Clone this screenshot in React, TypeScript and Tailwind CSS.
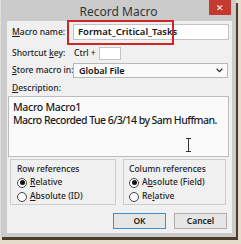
import React from "react";

const font = { fontFamily: '"Noto Sans", "Open Sans", Arial, sans-serif' };

function Radio({ checked, label }: { checked?: boolean; label: React.ReactNode }) {
  return (
    <div className="flex items-center gap-[3px] h-[13px]">
      <div className="w-[10px] h-[10px] shrink-0 rounded-full border border-[#444] bg-white flex items-center justify-center">
        {checked && <div className="w-[5px] h-[5px] rounded-full bg-[#111]" />}
      </div>
      <span className="text-[8.5px] leading-none font-medium text-[#1c1c1c] whitespace-nowrap">{label}</span>
    </div>
  );
}

export default function App() {
  return (
    <div className="w-[241px] h-[244px] bg-[#e6dccb] overflow-hidden" style={font}>
      <div className="relative w-[236px] h-[237px] bg-[#cbcbcb] border-l border-[#dedede] shadow-[2px_3px_0_#4b3d2e]">
        {/* title bar */}
        <div className="h-[21px] flex items-center justify-center">
          <span className="text-[12px] leading-none text-[#333] pt-[2px] whitespace-nowrap">Record Macro</span>
        </div>
        <div className="absolute right-[5px] top-0 w-[22px] h-[15px] bg-[#c53a2f] flex items-center justify-center text-white text-[9px] leading-none">
          ✕
        </div>
        {/* client */}
        <div className="ml-[6px] mr-[4px] h-[212px] bg-[#f0f0f0] relative px-[2px]">
          {/* row 1 */}
          <div className="flex items-center pt-[3px] h-[19px]">
            <span className="w-[64px] shrink-0 pl-[3px] text-[8.5px] leading-none font-medium text-[#1c1c1c] whitespace-nowrap">
              <span className="underline">M</span>acro name:
            </span>
            <div className="w-[156px] h-[16px] shrink-0 bg-white border border-[#c4c4c4] flex items-center pl-[4px]">
              <span className="text-[9.5px] leading-none font-semibold text-[#111] whitespace-nowrap">Format_Critical_Tasks</span>
            </div>
          </div>
          <div className="absolute left-[60px] top-[-1px] w-[107px] h-[25px] border-2 border-[#d0262a]" />
          {/* row 2 */}
          <div className="flex items-center mt-[7px] h-[13px]">
            <span className="w-[64px] shrink-0 pl-[3px] text-[8.5px] leading-none font-medium text-[#1c1c1c] whitespace-nowrap">
              Shortcut <span className="underline">k</span>ey:
            </span>
            <span className="text-[8.5px] leading-none font-medium text-[#1c1c1c] w-[26px] shrink-0 pl-[1px] whitespace-nowrap">Ctrl +</span>
            <div className="w-[22px] h-[13px] shrink-0 bg-white border border-[#c4c4c4]" />
          </div>
          {/* row 3 */}
          <div className="flex items-center mt-[3px] h-[15px]">
            <span className="w-[64px] shrink-0 pl-[3px] text-[8.5px] leading-none font-medium text-[#1c1c1c] whitespace-nowrap">
              <span className="underline">S</span>tore macro in:
            </span>
            <div className="w-[155px] h-[15px] shrink-0 bg-[#fafafa] border border-[#b8b8b8] flex items-center justify-between pl-[5px] pr-[4px]">
              <span className="text-[9px] leading-none font-semibold text-[#111] whitespace-nowrap">Global File</span>
              <svg width="7" height="5" viewBox="0 0 7 5">
                <path d="M0.7 0.8 L3.5 3.6 L6.3 0.8" stroke="#333" strokeWidth="1.3" fill="none" />
              </svg>
            </div>
          </div>
          {/* description */}
          <div className="mt-[4px] h-[13px] flex items-center pl-[3px]">
            <span className="text-[8.5px] leading-none font-medium text-[#1c1c1c] whitespace-nowrap">
              <span className="underline">D</span>escription:
            </span>
          </div>
          <div className="relative mt-[1px] ml-[-1px] w-[221px] h-[61px] bg-[#fafafa] border border-[#bdbdbd] pl-[4px] pt-[4px]">
            <div className="text-[10.5px] leading-[13px] font-medium text-[#1a1a1a] tracking-[-0.3px] whitespace-nowrap">Macro Macro1</div>
            <div className="text-[10.5px] leading-[13px] font-medium text-[#1a1a1a] tracking-[-0.55px] whitespace-nowrap">
              Macro Recorded Tue 6/3/14 by Sam Huffman.
            </div>
            <svg className="absolute left-[176px] top-[41px]" width="7" height="14" viewBox="0 0 7 14">
              <path d="M1 0.5 H6 M3.5 0.5 V13.5 M1 13.5 H6" stroke="#333" strokeWidth="1" fill="none" />
            </svg>
          </div>
          {/* groups */}
          <div className="flex mt-[2px] gap-[7px] pl-[1px]">
            <div className="w-[106px] h-[46px] border border-[#cdcdcd] pl-[6px] pt-[3px] flex flex-col gap-[1px]">
              <span className="text-[8.5px] leading-[12px] font-medium text-[#1c1c1c] whitespace-nowrap">Row references</span>
              <Radio checked label={<><span className="underline">R</span>elative</>} />
              <Radio label={<><span className="underline">A</span>bsolute (ID)</>} />
            </div>
            <div className="w-[103px] h-[46px] border border-[#cdcdcd] pl-[5px] pt-[3px] flex flex-col gap-[1px]">
              <span className="text-[8.5px] leading-[12px] font-medium text-[#1c1c1c] whitespace-nowrap">Column references</span>
              <Radio checked label={<>A<span className="underline">b</span>solute (Field)</>} />
              <Radio label={<>Re<span className="underline">l</span>ative</>} />
            </div>
          </div>
          {/* buttons */}
          <div className="flex justify-end gap-[8px] mt-[8px] pr-[3px]">
            <div className="w-[53px] h-[16px] bg-[#e6e6e6] border border-[#3c8fd6] flex items-center justify-center">
              <span className="text-[8.5px] leading-none font-semibold text-[#222]">OK</span>
            </div>
            <div className="w-[53px] h-[16px] bg-[#e6e6e6] border border-[#adadad] flex items-center justify-center">
              <span className="text-[8.5px] leading-none font-semibold text-[#222]">Cancel</span>
            </div>
          </div>
        </div>
      </div>
    </div>
  );
}
